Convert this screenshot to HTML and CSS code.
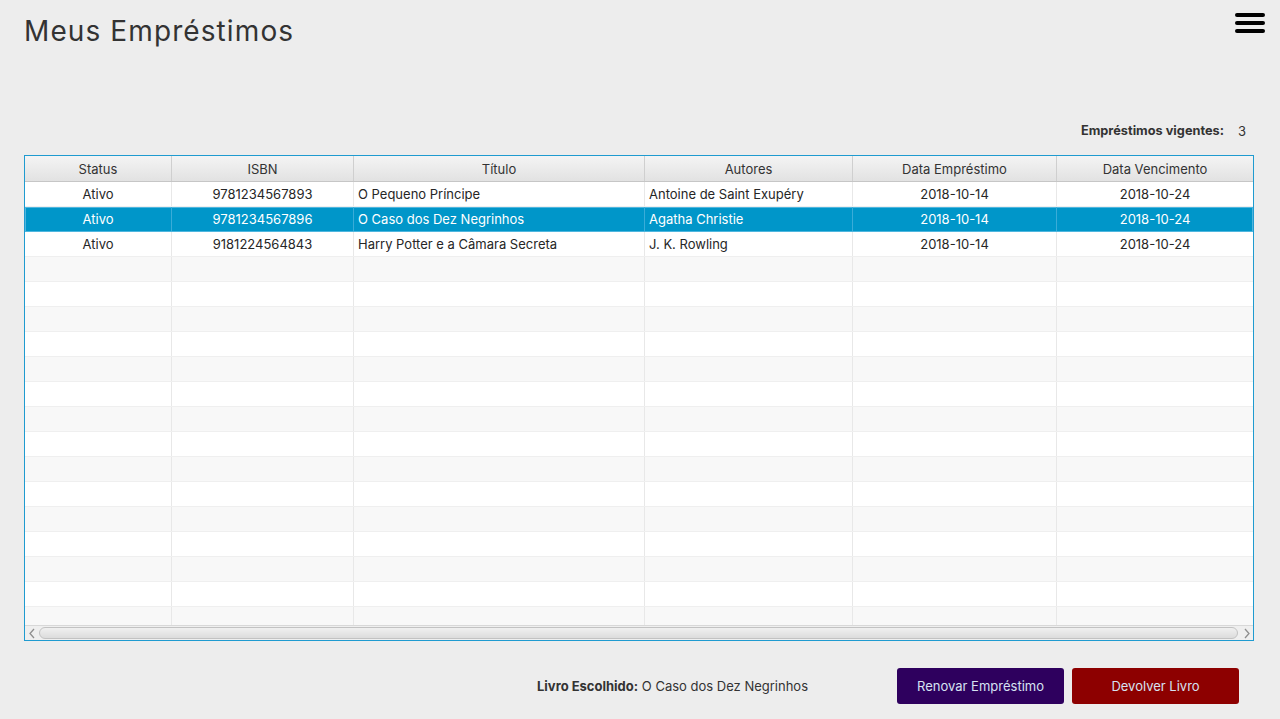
FILE: index.html
```html
<!DOCTYPE html>
<html lang="pt">
<head>
<meta charset="utf-8">
<title>Meus Empréstimos</title>
<link rel="stylesheet" href="styles.css">
</head>
<body>
<div class="page">
  <header class="topbar">
    <h1 class="title">Meus Empréstimos</h1>
    <button class="menu" aria-label="Menu"><span></span><span></span><span></span></button>
  </header>

  <div class="summary">
    <span class="summary-label">Empréstimos vigentes:</span>
    <span class="summary-value">3</span>
  </div>

  <div class="table">
    <div class="row head">
      <div class="cell">Status</div>
      <div class="cell">ISBN</div>
      <div class="cell">Título</div>
      <div class="cell">Autores</div>
      <div class="cell">Data Empréstimo</div>
      <div class="cell">Data Vencimento</div>
    </div>
    <div class="body">
      <div class="row">
        <div class="cell c">Ativo</div>
        <div class="cell c">9781234567893</div>
        <div class="cell l">O Pequeno Príncipe</div>
        <div class="cell l">Antoine de Saint Exupéry</div>
        <div class="cell c">2018-10-14</div>
        <div class="cell c">2018-10-24</div>
      </div>
      <div class="row selected">
        <div class="cell c">Ativo</div>
        <div class="cell c">9781234567896</div>
        <div class="cell l">O Caso dos Dez Negrinhos</div>
        <div class="cell l">Agatha Christie</div>
        <div class="cell c">2018-10-14</div>
        <div class="cell c">2018-10-24</div>
      </div>
      <div class="row">
        <div class="cell c">Ativo</div>
        <div class="cell c">9181224564843</div>
        <div class="cell l">Harry Potter e a Câmara Secreta</div>
        <div class="cell l">J. K. Rowling</div>
        <div class="cell c">2018-10-14</div>
        <div class="cell c">2018-10-24</div>
      </div>
      <div class="row odd"><div class="cell"></div><div class="cell"></div><div class="cell"></div><div class="cell"></div><div class="cell"></div><div class="cell"></div></div>
      <div class="row"><div class="cell"></div><div class="cell"></div><div class="cell"></div><div class="cell"></div><div class="cell"></div><div class="cell"></div></div>
      <div class="row odd"><div class="cell"></div><div class="cell"></div><div class="cell"></div><div class="cell"></div><div class="cell"></div><div class="cell"></div></div>
      <div class="row"><div class="cell"></div><div class="cell"></div><div class="cell"></div><div class="cell"></div><div class="cell"></div><div class="cell"></div></div>
      <div class="row odd"><div class="cell"></div><div class="cell"></div><div class="cell"></div><div class="cell"></div><div class="cell"></div><div class="cell"></div></div>
      <div class="row"><div class="cell"></div><div class="cell"></div><div class="cell"></div><div class="cell"></div><div class="cell"></div><div class="cell"></div></div>
      <div class="row odd"><div class="cell"></div><div class="cell"></div><div class="cell"></div><div class="cell"></div><div class="cell"></div><div class="cell"></div></div>
      <div class="row"><div class="cell"></div><div class="cell"></div><div class="cell"></div><div class="cell"></div><div class="cell"></div><div class="cell"></div></div>
      <div class="row odd"><div class="cell"></div><div class="cell"></div><div class="cell"></div><div class="cell"></div><div class="cell"></div><div class="cell"></div></div>
      <div class="row"><div class="cell"></div><div class="cell"></div><div class="cell"></div><div class="cell"></div><div class="cell"></div><div class="cell"></div></div>
      <div class="row odd"><div class="cell"></div><div class="cell"></div><div class="cell"></div><div class="cell"></div><div class="cell"></div><div class="cell"></div></div>
      <div class="row"><div class="cell"></div><div class="cell"></div><div class="cell"></div><div class="cell"></div><div class="cell"></div><div class="cell"></div></div>
      <div class="row odd"><div class="cell"></div><div class="cell"></div><div class="cell"></div><div class="cell"></div><div class="cell"></div><div class="cell"></div></div>
      <div class="row"><div class="cell"></div><div class="cell"></div><div class="cell"></div><div class="cell"></div><div class="cell"></div><div class="cell"></div></div>
      <div class="row odd"><div class="cell"></div><div class="cell"></div><div class="cell"></div><div class="cell"></div><div class="cell"></div><div class="cell"></div></div>
    </div>
    <div class="hscroll">
      <span class="arrow"><svg width="8" height="11" viewBox="0 0 8 11"><path d="M6 1 L2 5.5 L6 10" fill="none" stroke="#8e8e8e" stroke-width="1.3"/></svg></span>
      <div class="track"></div>
      <span class="arrow"><svg width="8" height="11" viewBox="0 0 8 11"><path d="M2 1 L6 5.5 L2 10" fill="none" stroke="#8e8e8e" stroke-width="1.3"/></svg></span>
    </div>
  </div>

  <footer class="footer">
    <div class="chosen">
      <span class="chosen-label">Livro Escolhido:</span>
      <span class="chosen-value">O Caso dos Dez Negrinhos</span>
    </div>
    <button class="btn renew">Renovar Empréstimo</button>
    <button class="btn return">Devolver Livro</button>
  </footer>
</div>
</body>
</html>
```

FILE: styles.css
```css
* { box-sizing: border-box; }

html, body {
  margin: 0;
  padding: 0;
  background: #ededed;
}

body {
  font-family: Inter, "Liberation Sans", Arial, sans-serif;
  color: #333;
  font-size: 13px;
}

.page {
  width: 1280px;
  height: 719px;
  display: flex;
  flex-direction: column;
  overflow: hidden;
}

.topbar {
  display: flex;
  justify-content: space-between;
  align-items: flex-start;
  padding: 0 15px 0 24px;
  height: 119px;
}

.title {
  margin: 13px 0 0 0;
  font-size: 28px;
  line-height: 36px;
  font-weight: 400;
  color: #333;
  letter-spacing: 1.1px;
}

.menu {
  margin-top: 13px;
  padding: 0;
  border: 0;
  background: none;
  width: 30px;
  display: flex;
  flex-direction: column;
  gap: 4px;
}

.menu span {
  display: block;
  width: 30px;
  height: 4px;
  border-radius: 2px;
  background: #000;
}

.summary {
  display: flex;
  justify-content: flex-end;
  gap: 14px;
  padding-right: 34px;
  height: 36px;
  line-height: 24px;
}

.summary-label {
  font-weight: 700;
  font-size: 12.75px;
  color: #333;
}

.summary-value {
  color: #333;
}

.table {
  margin: 0 26px 0 24px;
  height: 486px;
  border: 1px solid #1f9bd0;
  background: #fff;
  display: flex;
  flex-direction: column;
}

.row {
  display: grid;
  grid-template-columns: 147px 182px 291px 208px 204px 1fr;
  height: 25px;
  background: #fff;
  border-bottom: 1px solid #efefef;
}

.row.odd { background: #f8f8f8; }

.cell {
  border-right: 1px solid #e8e8e8;
  line-height: 24px;
  white-space: nowrap;
  overflow: hidden;
  color: #262626;
}

.cell:last-child { border-right: 0; }

.cell.c { text-align: center; }
.cell.l { padding-left: 4px; }

.row.head {
  height: 26px;
  background: linear-gradient(#f4f4f4, #e2e2e2);
  border-bottom: 1px solid #c6c6c6;
}

.row.head .cell {
  text-align: center;
  border-right: 1px solid #cfcfcf;
  line-height: 27px;
  color: #333;
}

.row.head .cell:last-child { border-right: 0; }

.body {
  flex: 1;
  overflow: hidden;
}

.row.selected {
  background: #0096c9;
  border-bottom-color: #4fb6de;
  box-shadow: inset 0 1px 0 #4fb6de, inset 1px 0 0 #4fb6de, inset -1px 0 0 #4fb6de;
}

.row.selected .cell {
  color: #fff;
  border-right-color: #3aacd8;
}

.row.selected .cell:last-child { border-right: 0; }

.hscroll {
  height: 15px;
  display: flex;
  align-items: center;
  background: #efefef;
  border-top: 1px solid #d8d8d8;
}

.arrow {
  width: 13px;
  height: 13px;
  display: flex;
  align-items: center;
  justify-content: center;
}

.track {
  flex: 1;
  height: 12px;
  margin: 0 2px 0 1px;
  border: 1px solid #c2c2c2;
  border-radius: 6px;
  background: linear-gradient(#f0f0f0, #dcdcdc);
}

.footer {
  display: flex;
  justify-content: flex-end;
  align-items: center;
  padding: 27px 41px 0 0;
  gap: 8px;
}

.chosen {
  margin-right: 81px;
}

.chosen-label {
  font-weight: 700;
  font-size: 13px;
  color: #333;
}

.chosen-value { color: #333; margin-left: 0; }

.btn {
  width: 167px;
  height: 36px;
  border: 0;
  border-radius: 3px;
  font-family: inherit;
  font-size: 13px;
  color: #d6e2f2;
  cursor: pointer;
}

.btn.renew { background: #2e005e; }
.btn.return { background: #8d0000; }
```
